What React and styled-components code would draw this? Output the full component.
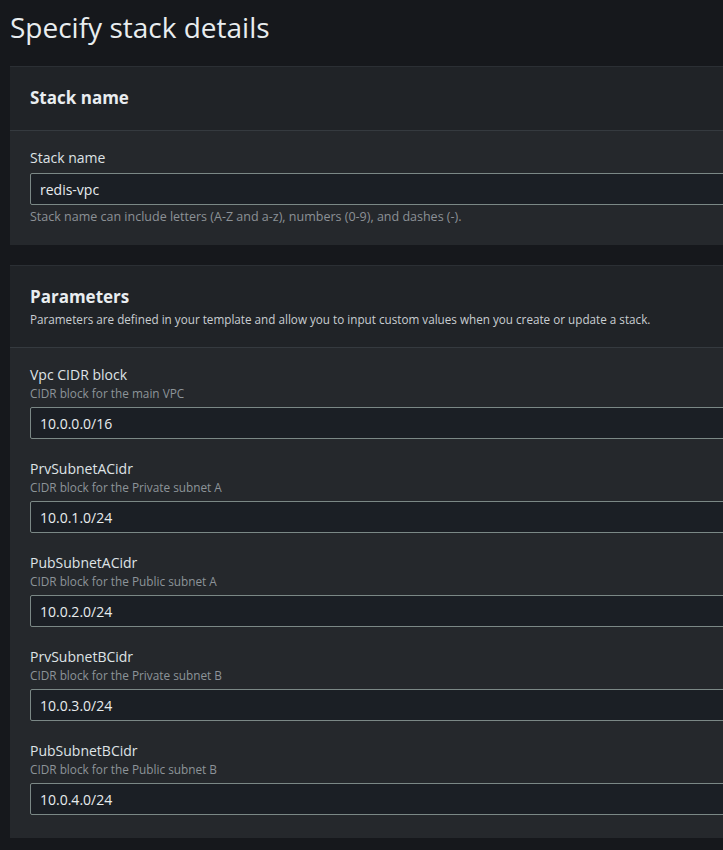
import React from "react";
import styled, { createGlobalStyle } from "styled-components";

const GlobalStyle = createGlobalStyle`
  html, body {
    margin: 0;
    padding: 0;
    background-color: #16181c;
    overflow: hidden;
  }
  body {
    font-family: "Open Sans", "Noto Sans", Arial, sans-serif;
    color: #e6eaec;
  }
`;

const parameters = [
  { name: "Vpc CIDR block", hint: "CIDR block for the main VPC", value: "10.0.0.0/16" },
  { name: "PrvSubnetACidr", hint: "CIDR block for the Private subnet A", value: "10.0.1.0/24" },
  { name: "PubSubnetACidr", hint: "CIDR block for the Public subnet A", value: "10.0.2.0/24" },
  { name: "PrvSubnetBCidr", hint: "CIDR block for the Private subnet B", value: "10.0.3.0/24" },
  { name: "PubSubnetBCidr", hint: "CIDR block for the Public subnet B", value: "10.0.4.0/24" },
];

function App() {
  return (
    <>
      <GlobalStyle />
      <Page>
        <PageTitle>Specify stack details</PageTitle>

        <Container>
          <ContainerHeader>
            <HeaderTitle>Stack name</HeaderTitle>
          </ContainerHeader>
          <ContainerBody>
            <Field>
              <Label>Stack name</Label>
              <Input defaultValue="redis-vpc" />
              <Constraint>
                Stack name can include letters (A-Z and a-z), numbers (0-9), and dashes (-).
              </Constraint>
            </Field>
          </ContainerBody>
        </Container>

        <Container>
          <ContainerHeader>
            <HeaderTitle>Parameters</HeaderTitle>
            <HeaderDescription>
              Parameters are defined in your template and allow you to input custom values when you create or update a stack.
            </HeaderDescription>
          </ContainerHeader>
          <ContainerBody $gap={21} $bottom={23}>
            {parameters.map((p) => (
              <Field key={p.name}>
                <Label>{p.name}</Label>
                <Description>{p.hint}</Description>
                <Input defaultValue={p.value} />
              </Field>
            ))}
          </ContainerBody>
        </Container>
      </Page>
    </>
  );
}

const Page = styled.main`
  width: 800px;
  padding: 8px 0 0 10px;
  display: flex;
  flex-direction: column;
  gap: 20px;
`;

const PageTitle = styled.h1`
  margin: 0;
  height: 38px;
  font-size: 28px;
  line-height: 38px;
  font-weight: 400;
  color: #e9edef;
`;

const Container = styled.section`
  background-color: #25282c;
  border-top: 1px solid #2b2f34;
`;

const ContainerHeader = styled.header`
  background-color: #202327;
  padding: 19px 20px 20px;
  border-bottom: 1px solid #353a3f;
`;

const HeaderTitle = styled.h2`
  margin: 0;
  font-size: 17px;
  line-height: 24px;
  font-weight: 700;
  color: #e9edf0;
`;

const HeaderDescription = styled.p`
  margin: 2px 0 0;
  font-size: 11.7px;
  line-height: 16px;
  color: #c9ced2;
`;

const ContainerBody = styled.div`
  display: flex;
  flex-direction: column;
  gap: ${(p) => p.$gap || 0}px;
  padding: 18px 20px ${(p) => p.$bottom || 20}px;
`;

const Field = styled.div`
  display: flex;
  flex-direction: column;
`;

const Label = styled.label`
  font-size: 14px;
  line-height: 18px;
  color: #dfe3e6;
  margin-bottom: 1px;
`;

const Description = styled.span`
  font-size: 11.8px;
  line-height: 17px;
  color: #8d9499;
`;

const Input = styled.input`
  box-sizing: border-box;
  margin-top: 5px;
  height: 32px;
  width: 100%;
  padding: 0 9px;
  background-color: #1b1f25;
  border: 1px solid #7b8886;
  border-radius: 2px;
  font-family: "Open Sans", "Noto Sans", Arial, sans-serif;
  font-size: 14px;
  color: #e8ecee;
  outline: none;
`;

const Constraint = styled.span`
  margin-top: 4px;
  font-size: 12.5px;
  line-height: 16px;
  color: #8c9196;
`;

export default App;
